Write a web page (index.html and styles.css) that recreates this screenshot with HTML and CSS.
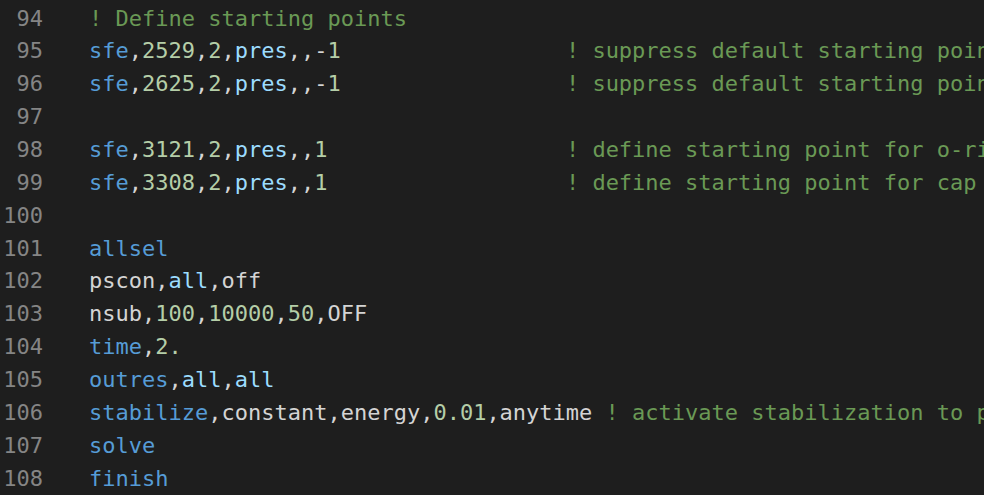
FILE: index.html
```html
<!DOCTYPE html>
<html>
<head>
<meta charset="utf-8">
<link rel="stylesheet" href="styles.css">
</head>
<body>
<div class="editor">
  <div class="line"><span class="ln">94</span><span class="code"><span class="c">! Define starting points</span></span></div>
  <div class="line"><span class="ln">95</span><span class="code"><span class="k">sfe</span>,<span class="n">2529</span>,<span class="n">2</span>,<span class="v">pres</span>,,-<span class="n">1</span>                 <span class="c">! suppress default starting point</span></span></div>
  <div class="line"><span class="ln">96</span><span class="code"><span class="k">sfe</span>,<span class="n">2625</span>,<span class="n">2</span>,<span class="v">pres</span>,,-<span class="n">1</span>                 <span class="c">! suppress default starting point</span></span></div>
  <div class="line"><span class="ln">97</span><span class="code"></span></div>
  <div class="line"><span class="ln">98</span><span class="code"><span class="k">sfe</span>,<span class="n">3121</span>,<span class="n">2</span>,<span class="v">pres</span>,,<span class="n">1</span>                  <span class="c">! define starting point for o-ring</span></span></div>
  <div class="line"><span class="ln">99</span><span class="code"><span class="k">sfe</span>,<span class="n">3308</span>,<span class="n">2</span>,<span class="v">pres</span>,,<span class="n">1</span>                  <span class="c">! define starting point for cap</span></span></div>
  <div class="line"><span class="ln">100</span><span class="code"></span></div>
  <div class="line"><span class="ln">101</span><span class="code"><span class="k">allsel</span></span></div>
  <div class="line"><span class="ln">102</span><span class="code">pscon,<span class="v">all</span>,off</span></div>
  <div class="line"><span class="ln">103</span><span class="code">nsub,<span class="n">100</span>,<span class="n">10000</span>,<span class="n">50</span>,OFF</span></div>
  <div class="line"><span class="ln">104</span><span class="code"><span class="k">time</span>,<span class="n">2.</span></span></div>
  <div class="line"><span class="ln">105</span><span class="code"><span class="k">outres</span>,<span class="v">all</span>,<span class="v">all</span></span></div>
  <div class="line"><span class="ln">106</span><span class="code"><span class="k">stabilize</span>,constant,energy,<span class="n">0.01</span>,anytime <span class="c">! activate stabilization to prevent rigid body motion</span></span></div>
  <div class="line"><span class="ln">107</span><span class="code"><span class="k">solve</span></span></div>
  <div class="line"><span class="ln">108</span><span class="code"><span class="k">finish</span></span></div>
</div>
</body>
</html>
```
FILE: styles.css
```css
html, body {
  margin: 0;
  padding: 0;
  background: #1e1e1e;
  overflow: hidden;
  width: 984px;
  height: 495px;
}
.editor {
  padding-top: 2.5px;
  font-family: "DejaVu Sans Mono", "Liberation Mono", monospace;
  font-size: 22px;
  color: #d4d4d4;
}
.line {
  display: flex;
  height: 32.86px;
  line-height: 32.86px;
  white-space: pre;
}
.ln {
  flex: 0 0 43px;
  text-align: right;
  color: #858585;
}
.code {
  margin-left: 46px;
  white-space: pre;
}
.k { color: #569cd6; }
.n { color: #b5cea8; }
.v { color: #9cdcfe; }
.c { color: #6a9955; }
```
